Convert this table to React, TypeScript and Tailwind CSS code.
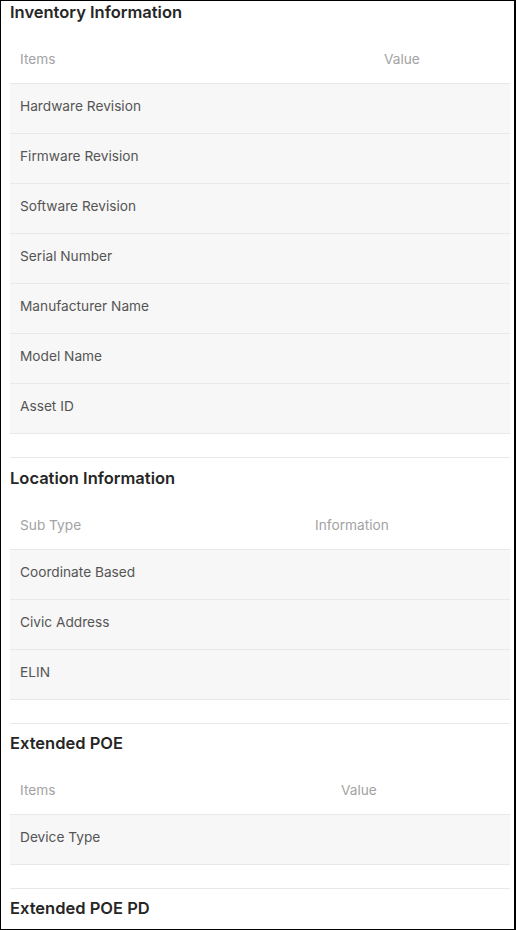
type Section = {
  title: string;
  headers: [string, string];
  firstCol: string;
  rows: string[];
};

const sections: Section[] = [
  {
    title: "Inventory Information",
    headers: ["Items", "Value"],
    firstCol: "w-[364px]",
    rows: [
      "Hardware Revision",
      "Firmware Revision",
      "Software Revision",
      "Serial Number",
      "Manufacturer Name",
      "Model Name",
      "Asset ID",
    ],
  },
  {
    title: "Location Information",
    headers: ["Sub Type", "Information"],
    firstCol: "w-[295px]",
    rows: ["Coordinate Based", "Civic Address", "ELIN"],
  },
  {
    title: "Extended POE",
    headers: ["Items", "Value"],
    firstCol: "w-[321px]",
    rows: ["Device Type"],
  },
];

function InfoTable({ section }: { section: Section }) {
  return (
    <div className="flex flex-col text-[13.7px]">
      <div className="flex h-[50px] items-center border-b border-[#e8e8e8] bg-white pt-px text-[#a3a3a3]">
        <div className={`${section.firstCol} shrink-0 pl-[10px]`}>{section.headers[0]}</div>
        <div className="pl-[10px]">{section.headers[1]}</div>
      </div>
      {section.rows.map((row) => (
        <div
          key={row}
          className="flex h-[50px] items-center border-b border-[#e8e8e8] bg-[#f7f7f7] pb-[4px] text-[#555555]"
        >
          <div className={`${section.firstCol} shrink-0 pl-[10px]`}>{row}</div>
          <div className="pl-[10px]"></div>
        </div>
      ))}
    </div>
  );
}

export default function App() {
  return (
    <div
      className="h-[930px] w-[516px] overflow-hidden border-t border-b border-l border-r-2 border-black bg-white pl-[9px] pr-[4px]"
      style={{ fontFamily: "Inter, 'Noto Sans', sans-serif" }}
    >
      {sections.map((section, i) => (
        <div key={section.title} className="flex flex-col">
          {i > 0 && (
            <div className={`${i === 2 ? "mb-[7px]" : "mb-[8px]"} mt-[23px] border-t border-[#e8e8e8]`} />
          )}
          <h2 className={`${i === 0 ? "-mt-px" : ""} mb-[10px] text-[16.5px] font-semibold leading-[24px] text-[#262626]`}>
            {section.title}
          </h2>
          <InfoTable section={section} />
        </div>
      ))}
      <div className="mb-[7px] mt-[23px] border-t border-[#e8e8e8]" />
      <h2 className="text-[16.5px] font-semibold leading-[24px] text-[#262626]">Extended POE PD</h2>
    </div>
  );
}
